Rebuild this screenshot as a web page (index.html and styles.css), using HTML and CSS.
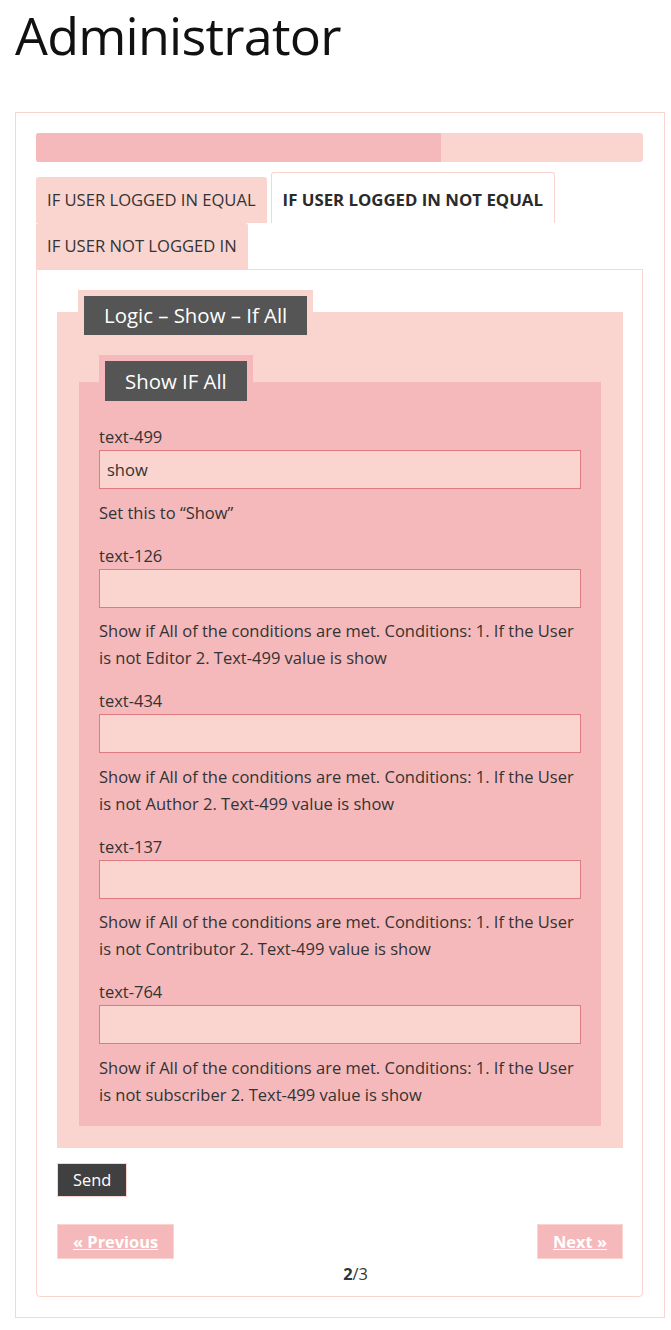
FILE: index.html
```html
<!DOCTYPE html>
<html lang="en">
<head>
<meta charset="utf-8">
<title>Administrator</title>
<link rel="stylesheet" href="styles.css">
</head>
<body>
<h1 class="page-title">Administrator</h1>
<div class="form-box">
  <div class="progress"><div class="progress-fill" style="width:66.6667%"></div></div>
  <ul class="tab-list">
    <li class="tab">IF USER LOGGED IN EQUAL</li>
    <li class="tab tab-active">IF USER LOGGED IN NOT EQUAL</li>
    <li class="tab">IF USER NOT LOGGED IN</li>
  </ul>
  <div class="panel">
    <div class="fs fs-outer">
      <div class="legend legend-outer">Logic – Show – If All</div>
      <div class="fs fs-inner">
        <div class="legend legend-inner">Show IF All</div>
        <div class="fields">
          <div class="field">
            <label class="field-label">text-499</label>
            <input class="field-input" type="text" value="show">
            <p class="field-desc">Set this to “Show”</p>
          </div>
          <div class="field">
            <label class="field-label">text-126</label>
            <input class="field-input" type="text" value="">
            <p class="field-desc">Show if All of the conditions are met. Conditions: 1. If the User is not Editor 2. Text-499 value is show</p>
          </div>
          <div class="field">
            <label class="field-label">text-434</label>
            <input class="field-input" type="text" value="">
            <p class="field-desc">Show if All of the conditions are met. Conditions: 1. If the User is not Author 2. Text-499 value is show</p>
          </div>
          <div class="field">
            <label class="field-label">text-137</label>
            <input class="field-input" type="text" value="">
            <p class="field-desc">Show if All of the conditions are met. Conditions: 1. If the User is not Contributor 2. Text-499 value is show</p>
          </div>
          <div class="field">
            <label class="field-label">text-764</label>
            <input class="field-input" type="text" value="">
            <p class="field-desc">Show if All of the conditions are met. Conditions: 1. If the User is not subscriber 2. Text-499 value is show</p>
          </div>
        </div>
      </div>
    </div>
    <div class="send-row"><button class="send-btn" type="button">Send</button></div>
    <div class="pager">
      <a class="pager-btn pager-prev" href="#">« Previous</a>
      <a class="pager-btn pager-next" href="#">Next »</a>
      <div class="pager-count"><b>2</b>/3</div>
    </div>
  </div>
</div>
</body>
</html>
```

FILE: styles.css
```css
html, body {
  margin: 0;
  padding: 0;
  background: #ffffff;
}
body {
  font-family: "Open Sans", "Noto Sans", "DejaVu Sans", sans-serif;
  color: #333333;
}
.page-title {
  margin: 5px 0 47px 0;
  padding-left: 15px;
  font-size: 52px;
  line-height: 60px;
  font-weight: 400;
  letter-spacing: -0.75px;
  color: #111111;
}
.form-box {
  margin-left: 15px;
  width: 650px;
  box-sizing: border-box;
  border: 1px solid #fad4cf;
  padding: 20px 21px 20px 20px;
}
.progress {
  height: 29px;
  background: #fad4cf;
  border-radius: 3px;
  overflow: hidden;
  margin-bottom: 10px;
}
.progress-fill {
  height: 100%;
  background: #f5b9bb;
}
.tab-list {
  list-style: none;
  margin: 0;
  padding: 0;
  display: flex;
  flex-wrap: wrap;
  align-items: flex-end;
  column-gap: 4px;
}
.tab {
  height: 46px;
  line-height: 46px;
  padding: 0 11px;
  background: #fad4cf;
  border-radius: 3px 3px 0 0;
  font-size: 16.6px;
  color: #333333;
  white-space: nowrap;
}
.tab-active {
  background: #ffffff;
  border: 1px solid #fad4cf;
  border-bottom: 0;
  padding-top: 4px;
  box-sizing: border-box;
  height: 51px;
  line-height: 46px;
  font-weight: 700;
  font-size: 16.8px;
  color: #2a2a2a;
}
.panel {
  border: 1px solid #fad4cf;
  border-radius: 0 0 4px 4px;
  padding: 20px 19px 10px 20px;
}
.fs {
  display: flex;
  flex-direction: column;
  align-items: flex-start;
}
.fs-outer {
  margin-top: 22px;
  background: #fad4cf;
  padding: 0 22px 22px 22px;
}
.fs-inner {
  align-self: stretch;
  margin-top: 47px;
  background: #f5b9bb;
  padding: 0 20px 18.5px 20px;
}
.legend {
  background: #555555;
  color: #ffffff;
  font-size: 20.4px;
  padding: 0 20px;
  white-space: nowrap;
}
.legend-outer {
  margin-top: -22px;
  margin-left: -1px;
  border: 6px solid #fad4cf;
  border-bottom: 0;
  line-height: 39px;
}
.legend-inner {
  margin-top: -27px;
  border: 6px solid #f5b9bb;
  border-bottom: 0;
  line-height: 40px;
}
.fields {
  align-self: stretch;
  margin-top: 22px;
  display: flex;
  flex-direction: column;
  row-gap: 16px;
}
.field {
  display: flex;
  flex-direction: column;
}
.field-label {
  font-size: 16.5px;
  line-height: 27px;
  color: #333333;
}
.field-input {
  display: block;
  box-sizing: border-box;
  width: 100%;
  height: 39px;
  margin: 0 0 9.5px 0;
  padding: 0 7px;
  border: 1px solid #de7a80;
  border-radius: 0;
  background: #fad4cf;
  font-family: "Open Sans", "Noto Sans", sans-serif;
  font-size: 16.5px;
  color: #333333;
  outline: none;
}
.field-desc {
  margin: 0;
  font-size: 16.5px;
  line-height: 27px;
  color: #333333;
}
.send-row {
  margin-top: 15px;
  display: flex;
}
.send-btn {
  height: 34px;
  padding: 0 15px;
  border: 1px solid #fad4cf;
  background: #404040;
  color: #ffffff;
  font-family: "Open Sans", "Noto Sans", sans-serif;
  font-size: 16.4px;
  line-height: 32px;
  border-radius: 0;
  cursor: pointer;
}
.pager {
  margin-top: 27px;
  display: grid;
  grid-template-columns: auto 1fr auto;
  grid-template-rows: auto auto;
}
.pager-btn {
  display: block;
  height: 35px;
  box-sizing: border-box;
  line-height: 33px;
  padding: 0 15px;
  border: 1px solid #fad4cf;
  background: #f5b9bb;
  color: #ffffff;
  font-weight: 700;
  font-size: 16.4px;
  text-decoration: underline;
  white-space: nowrap;
}
.pager-prev {
  grid-column: 1;
  grid-row: 1;
}
.pager-next {
  grid-column: 3;
  grid-row: 1;
}
.pager-count {
  grid-column: 2;
  grid-row: 2;
  margin-top: 3px;
  text-align: center;
  font-size: 16.4px;
  line-height: 24px;
  color: #333333;
}
```
